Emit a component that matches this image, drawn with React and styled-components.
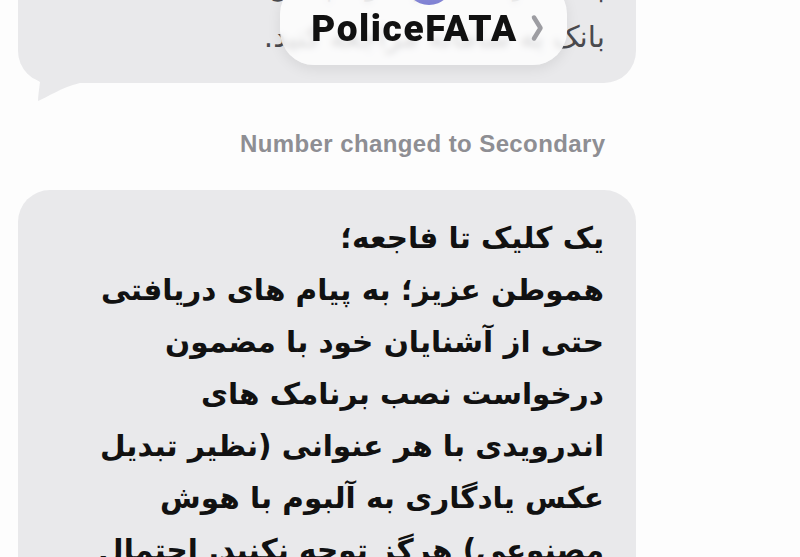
import React from "react";
import styled, { createGlobalStyle } from "styled-components";

const GlobalStyle = createGlobalStyle`
  html, body {
    margin: 0;
    padding: 0;
    background: #fdfdfd;
    overflow: hidden;
  }
  body {
    font-family: "DejaVu Sans", "Noto Sans", sans-serif;
  }
`;

const Screen = styled.div`
  width: 800px;
  height: 557px;
  overflow: hidden;
  position: relative;
  display: flex;
  flex-direction: column;
`;

const Bubble = styled.div`
  position: relative;
  width: 618px;
  margin-left: 18px;
  background: #e9e9eb;
  border-radius: 32px;
  box-sizing: border-box;
  padding: ${(p) => p.$padding};
  margin-top: ${(p) => p.$top}px;
  direction: rtl;
  text-align: right;
  flex-shrink: 0;
`;

const Tail = styled.svg`
  position: absolute;
  left: 0;
  bottom: -19px;
  width: 62px;
  height: 62px;
`;

const Line = styled.div`
  font-family: "DejaVu Sans", sans-serif;
  font-size: 29.5px;
  font-weight: ${(p) => (p.$muted ? 400 : 700)};
  color: ${(p) => (p.$muted ? "#4a4a4e" : "#111")};
  line-height: 52px;
  white-space: nowrap;
`;

const Pill = styled.div`
  position: absolute;
  top: -20px;
  left: 280px;
  width: 287px;
  height: 85px;
  box-sizing: border-box;
  padding-bottom: 18px;
  padding-left: 8px;
  border-radius: 34px;
  background: rgba(255, 255, 255, 0.8);
  backdrop-filter: blur(3px);
  box-shadow: 0 4px 14px rgba(0, 0, 0, 0.08);
  display: flex;
  align-items: flex-end;
  justify-content: center;
  gap: 12px;
  direction: ltr;
`;

const Avatar = styled.div`
  position: absolute;
  top: -43px;
  left: 405px;
  width: 48px;
  height: 48px;
  border-radius: 50%;
  background: linear-gradient(180deg, #b0ade9, #7e80d2);
`;

const Name = styled.span`
  font-family: "Roboto", "Liberation Sans", sans-serif;
  font-weight: 900;
  font-size: 37px;
  line-height: 1;
  letter-spacing: 1.6px;
  color: #111;
`;

const Chevron = styled.svg`
  width: 14px;
  height: 28px;
  margin-bottom: 5px;
`;

const Status = styled.div`
  margin-top: 49px;
  margin-left: 240px;
  font-family: "Liberation Sans", "Roboto", sans-serif;
  font-weight: 700;
  font-size: 24px;
  color: #8e8e93;
  line-height: 24px;
  letter-spacing: 0.4px;
  white-space: nowrap;
`;

const Body = styled.div`
  margin-top: 34px;
`;

const topLines = ["پیامک رسمی از سوی پلیس فتا", "بانک به سامانه مراجعه کنید."];

const lines = [
  "یک کلیک تا فاجعه؛",
  "هموطن عزیز؛ به پیام های دریافتی",
  "حتی از آشنایان خود با مضمون",
  "درخواست نصب برنامک های",
  "اندرویدی با هر عنوانی (نظیر تبدیل",
  "عکس یادگاری به آلبوم با هوش",
  "مصنوعی) هرگز توجه نکنید. احتمال",
];

export default function App() {
  return (
    <>
      <GlobalStyle />
      <Screen>
        <Bubble $top={-41} $padding="0 31px 20px 30px">
          {topLines.map((t) => (
            <Line key={t} $muted>
              {t}
            </Line>
          ))}
          <Tail viewBox="0 0 62 62">
            <path
              d="M0 0 C1 20 10 34 22 42 C21 50 20 56 20 61 C30 57 42 48 62 43 L62 0 Z"
              fill="#e9e9eb"
            />
          </Tail>
        </Bubble>
        <Pill>
          <Name>PoliceFATA</Name>
          <Chevron viewBox="0 0 14 28">
            <path
              d="M4 3.5 L10.5 14 L4 24.5"
              fill="none"
              stroke="#9d9da2"
              strokeWidth="4.5"
              strokeLinecap="round"
              strokeLinejoin="round"
            />
          </Chevron>
        </Pill>
        <Avatar />
        <Status>Number changed to Secondary</Status>
        <Body>
          <Bubble $top={0} $padding="22px 32px 40px 30px">
            {lines.map((t) => (
              <Line key={t}>{t}</Line>
            ))}
          </Bubble>
        </Body>
      </Screen>
    </>
  );
}
